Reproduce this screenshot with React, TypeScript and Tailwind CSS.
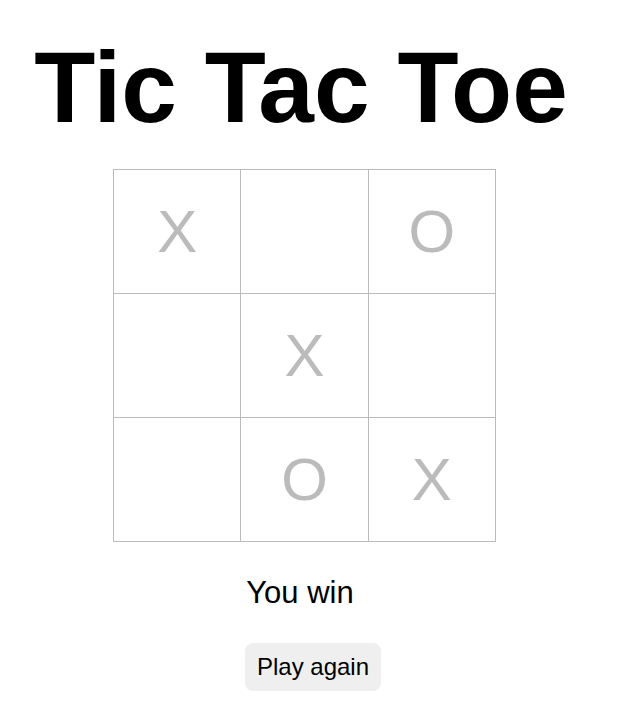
export default function App() {
  const cells = ["X", "", "O", "", "X", "", "", "O", "X"];
  return (
    <div className="min-h-[708px] w-[622px] bg-white flex flex-col items-center text-black" style={{ fontFamily: '"Liberation Sans", Arial, sans-serif' }}>
      <h1 className="mt-[30px] text-[100px] font-bold leading-[115px] -ml-[20px]">Tic Tac Toe</h1>
      <div className="mt-[24px] -ml-[13px] grid grid-cols-3 w-[383px] border-t border-l border-[#bbbbbb]">
        {cells.map((c, i) => (
          <div key={i} className="h-[124px] border-r border-b border-[#bbbbbb] flex items-center justify-center text-[60px] text-[#bbbbbb] leading-none">
            {c}
          </div>
        ))}
      </div>
      <p className="mt-[34px] text-[31px] leading-[34px] -ml-[22px]">You win</p>
      <button className="mt-[33px] ml-[4px] bg-[#efefef] rounded-[8px] px-[12px] h-[48px] text-[24px] leading-[28px]">Play again</button>
    </div>
  );
}
